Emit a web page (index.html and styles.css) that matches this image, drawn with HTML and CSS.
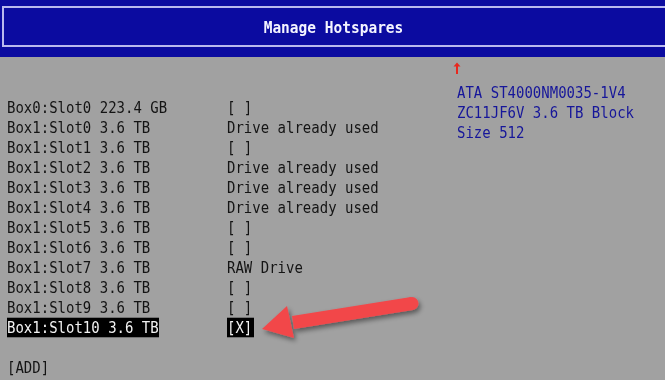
FILE: index.html
```html
<!DOCTYPE html>
<html>
<head>
<meta charset="utf-8">
<link rel="stylesheet" href="styles.css">
</head>
<body>
<header class="banner">
  <div class="banner-box"><h1 class="title">Manage Hotspares</h1></div>
</header>
<main class="screen">
  <section class="list">
    <div class="row"><span>Box0:Slot0 223.4 GB</span><span>[ ]</span></div>
    <div class="row"><span>Box1:Slot0 3.6 TB</span><span>Drive already used</span></div>
    <div class="row"><span>Box1:Slot1 3.6 TB</span><span>[ ]</span></div>
    <div class="row"><span>Box1:Slot2 3.6 TB</span><span>Drive already used</span></div>
    <div class="row"><span>Box1:Slot3 3.6 TB</span><span>Drive already used</span></div>
    <div class="row"><span>Box1:Slot4 3.6 TB</span><span>Drive already used</span></div>
    <div class="row"><span>Box1:Slot5 3.6 TB</span><span>[ ]</span></div>
    <div class="row"><span>Box1:Slot6 3.6 TB</span><span>[ ]</span></div>
    <div class="row"><span>Box1:Slot7 3.6 TB</span><span>RAW Drive</span></div>
    <div class="row"><span>Box1:Slot8 3.6 TB</span><span>[ ]</span></div>
    <div class="row"><span>Box1:Slot9 3.6 TB</span><span>[ ]</span></div>
    <div class="row"><span class="sel">Box1:Slot10 3.6 TB</span><span class="sel sel-x">[X]</span></div>
    <div class="row blank"></div>
    <div class="row"><span>[ADD]</span></div>
  </section>
  <aside class="help">
    <div class="help-line"><svg class="up" width="8" height="13" viewBox="0 0 8 13"><path d="M4 12V3" stroke="#e8281e" stroke-width="2"/><path d="M0.5 4.5L4 0.5L7.5 4.5Z" fill="#e8281e"/></svg></div>
    <div class="help-line txt">ATA ST4000NM0035-1V4</div>
    <div class="help-line txt">ZC11JF6V 3.6 TB Block</div>
    <div class="help-line txt">Size 512</div>
  </aside>
  <svg class="pointer" width="665" height="380" viewBox="0 0 665 380">
    <defs>
      <filter id="sh" x="-20%" y="-40%" width="140%" height="180%">
        <feGaussianBlur in="SourceAlpha" stdDeviation="2.5"/>
        <feOffset dx="2" dy="3"/>
        <feComponentTransfer><feFuncA type="linear" slope="0.45"/></feComponentTransfer>
        <feMerge><feMergeNode/><feMergeNode in="SourceGraphic"/></feMerge>
      </filter>
    </defs>
    <g filter="url(#sh)" fill="#f2474a">
      <path d="M411 297 L292 316 L294 329 L413 310 Z"/>
      <circle cx="412" cy="303.5" r="6.5"/>
      <path d="M287 306 L262 329 L294 338 Z"/>
    </g>
  </svg>
</main>
</body>
</html>
```
FILE: styles.css
```css
html, body {
  margin: 0;
  padding: 0;
}
body {
  width: 665px;
  height: 380px;
  overflow: hidden;
  background: #a1a1a1;
  font-family: "DejaVu Sans Mono", "Liberation Mono", monospace;
  font-size: 14px;
  color: #141414;
}
.banner {
  height: 57px;
  background: #0b0ba0;
  padding-top: 6px;
  padding-left: 2px;
  box-sizing: border-box;
}
.banner-box {
  height: 41px;
  box-sizing: border-box;
  border: 2px solid #b9b9ee;
  border-right: none;
  display: flex;
  align-items: center;
  justify-content: center;
}
.title {
  margin: 0;
  font-size: 14.5px;
  font-weight: bold;
  color: #f4f4ff;
  padding-right: 2px;
  transform: scaleY(1.15);
}
.screen {
  position: relative;
  display: flex;
  height: 323px;
  box-sizing: border-box;
}
.list {
  width: 442px;
  padding-left: 7px;
  padding-top: 40px;
}
.row {
  display: grid;
  grid-template-columns: 220px auto;
  justify-items: start;
  align-items: start;
  height: 20px;
  line-height: 20px;
  white-space: pre;
}
.row span {
  display: inline-block;
  transform: scaleY(1.15);
}
.sel {
  background: #000;
  color: #f2f2f2;
  line-height: 17px;
  margin-top: 1.5px;
}
.sel-x {
  padding-right: 2px;
}
.help {
  flex: 1;
  color: #16169a;
  margin-top: -3px;
}
.help-line {
  height: 20px;
  line-height: 20px;
  white-space: pre;
}
.help-line.txt {
  padding-left: 8px;
  transform: scaleY(1.15);
  transform-origin: left 9px;
}
.up {
  display: block;
  margin: 8px 0 0 4px;
}
.pointer {
  position: absolute;
  left: 0;
  top: -57px;
  pointer-events: none;
}
```
